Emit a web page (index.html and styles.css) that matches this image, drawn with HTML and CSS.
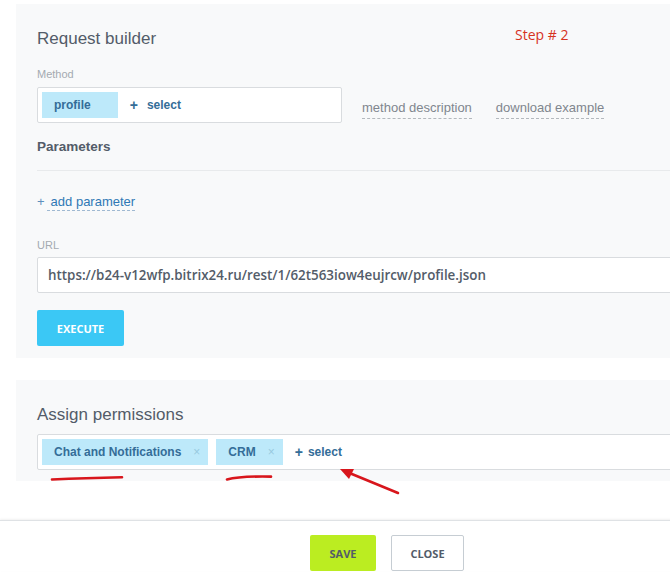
FILE: index.html
```html
<!DOCTYPE html>
<html lang="en">
<head>
<meta charset="utf-8">
<title>Request builder</title>
<link rel="stylesheet" href="styles.css">
</head>
<body>
<div class="page">
  <section class="panel builder">
    <h2 class="title">Request builder</h2>
    <div class="label label-method">Method</div>
    <div class="method-row">
      <div class="selector method-box">
        <span class="tag">profile<span class="x x-hidden">×</span></span>
        <span class="add-select"><span class="plus plus-wide">+</span>select</span>
      </div>
      <span class="dlink dlink-first">method description</span>
      <span class="dlink dlink-second">download example</span>
    </div>
    <div class="params-title">Parameters</div>
    <div class="divider"></div>
    <div class="add-param"><span class="add-plus">+</span><span class="add-link">add parameter</span></div>
    <div class="label label-url">URL</div>
    <div class="url-input">https://b24-v12wfp.bitrix24.ru/rest/1/62t563iow4eujrcw/profile.json</div>
    <button class="btn btn-exec" type="button">EXECUTE</button>
  </section>

  <section class="panel perms">
    <h2 class="title">Assign permissions</h2>
    <div class="selector perm-box">
      <span class="tag">Chat and Notifications<span class="x">×</span></span>
      <span class="tag">CRM<span class="x">×</span></span>
      <span class="add-select"><span class="plus">+</span>select</span>
    </div>
  </section>

  <footer class="footer">
    <button class="btn btn-save" type="button">SAVE</button>
    <button class="btn btn-close" type="button">CLOSE</button>
  </footer>

  <div class="step">Step # 2</div>
  <svg class="annot" width="670" height="576" viewBox="0 0 670 576" aria-hidden="true">
    <path d="M52 479.5 Q 85 478 122 477.3" fill="none" stroke="#d8161c" stroke-width="2.6" stroke-linecap="round"/>
    <path d="M227 479.5 Q 240 476 271 476.6" fill="none" stroke="#d8161c" stroke-width="2.6" stroke-linecap="round"/>
    <path d="M398 493 L 347 472" fill="none" stroke="#d8161c" stroke-width="2.6" stroke-linecap="round"/>
    <polygon points="340,469 354,469 349,479" fill="#d8161c"/>
  </svg>
</div>
</body>
</html>
```

FILE: styles.css
```css
html, body {
  margin: 0;
  padding: 0;
  overflow: hidden;
  background: #ffffff;
}

body {
  font-family: "Liberation Sans", Arial, sans-serif;
  color: #535c69;
}

.page {
  position: relative;
  width: 720px;
  height: 576px;
  padding-top: 4px;
  box-sizing: border-box;
}

.panel {
  margin-left: 16px;
  background: #f8f9fa;
  padding: 25px 20px 12px 21px;
}

.perms {
  margin-top: 22px;
  padding-bottom: 11px;
}

.title {
  margin: 0;
  font-size: 17px;
  line-height: 20px;
  font-weight: normal;
  color: #535c69;
}

.label {
  font-size: 11px;
  line-height: 13px;
  color: #a4aab1;
}

.label-method {
  margin-top: 19px;
}

.method-row {
  display: flex;
  align-items: flex-start;
  margin-top: 6px;
}

.selector {
  display: flex;
  align-items: center;
  gap: 8px;
  box-sizing: border-box;
  background: #ffffff;
  border: 1px solid #d9dcdf;
  border-radius: 2px;
  padding: 4px;
}

.method-box {
  width: 305px;
  flex: none;
}

.perm-box {
  margin-top: 9px;
}

.tag {
  display: flex;
  align-items: center;
  height: 26px;
  padding: 0 8px 0 12px;
  background: #bde9fa;
  color: #346d98;
  font-weight: bold;
  font-size: 12px;
  white-space: nowrap;
}

.x {
  margin-left: 12px;
  font-weight: normal;
  font-size: 12px;
  color: #98c9df;
}

.x-hidden {
  visibility: hidden;
}

.add-select {
  display: flex;
  align-items: center;
  margin-left: 4px;
  color: #346d98;
  font-weight: bold;
  font-size: 12px;
}

.plus {
  font-size: 14px;
  margin-right: 5px;
}

.plus-wide {
  margin-right: 9px;
}

.dlink {
  flex: none;
  margin-top: 13px;
  padding-bottom: 2px;
  font-size: 13px;
  line-height: 16px;
  color: #80868e;
  border-bottom: 1px dashed #b3b8bd;
}

.dlink-first {
  margin-left: 20px;
}

.dlink-second {
  margin-left: 24px;
}

.params-title {
  margin-top: 16px;
  font-weight: bold;
  font-size: 13.5px;
  line-height: 16px;
  color: #535c69;
}

.divider {
  margin-top: 15px;
  height: 1px;
  background: #e8eaec;
}

.add-param {
  display: flex;
  align-items: flex-start;
  margin-top: 23px;
  font-size: 13px;
  line-height: 16px;
}

.add-plus {
  color: #5d8fbd;
  margin-right: 2px;
}

.add-link {
  padding-left: 4px;
  color: #2f78b5;
  border-bottom: 1px dashed #9fb9d2;
}

.label-url {
  margin-top: 28px;
}

.url-input {
  margin-top: 5px;
  height: 36px;
  box-sizing: border-box;
  border: 1px solid #d9dcdf;
  border-radius: 2px;
  background: #ffffff;
  padding-left: 10px;
  line-height: 34px;
  font-family: "Open Sans", "Liberation Sans", sans-serif;
  font-weight: 600;
  font-size: 13.4px;
  color: #535c69;
  white-space: nowrap;
}

.btn {
  display: block;
  height: 36px;
  box-sizing: border-box;
  border: none;
  border-radius: 2px;
  padding: 0;
  font-family: "Open Sans", "Liberation Sans", sans-serif;
  font-weight: 700;
  font-size: 11px;
  text-align: center;
  cursor: pointer;
}

.btn-exec {
  margin-top: 17px;
  width: 87px;
  background: #3bc8f5;
  color: #ffffff;
}

.footer {
  margin-top: 39px;
  border-top: 1px solid #dfe2e5;
  box-shadow: 0 -1px 2px rgba(0, 0, 0, 0.06);
  background: #ffffff;
  display: flex;
  gap: 15px;
  padding: 14px 0 0 310px;
}

.btn-save {
  width: 66px;
  background: #bbed21;
  color: #535c69;
}

.btn-close {
  width: 73px;
  background: #ffffff;
  border: 1px solid #c6cdd3;
  color: #535c69;
}

.step {
  position: absolute;
  left: 515px;
  top: 25px;
  font-family: "Open Sans", "Liberation Sans", sans-serif;
  font-size: 14px;
  line-height: 20px;
  color: #d6321f;
}

.annot {
  position: absolute;
  left: 0;
  top: 0;
  pointer-events: none;
}
```
